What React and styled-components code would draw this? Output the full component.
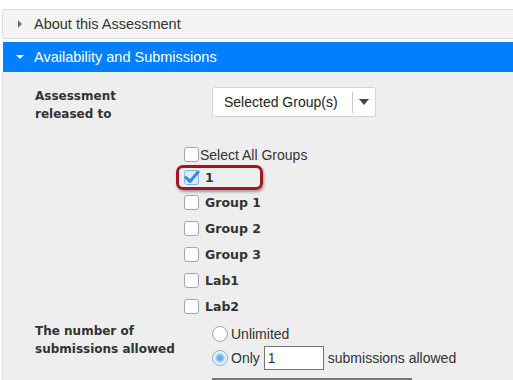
import React from 'react'
import styled, { createGlobalStyle } from 'styled-components';

const GlobalStyle = createGlobalStyle`
    body {
        margin: 0;
        background: #ffffff;
        font-family: "Liberation Sans", Arial, sans-serif;
        color: #333333;
    }
`;

const Page = styled.div`
    width: 513px;
    height: 380px;
    overflow: hidden;
    padding-top: 9px;
    padding-left: 2px;
    box-sizing: border-box;
`;

const PanelHeader = styled.div`
    display: flex;
    align-items: center;
    height: ${p => p.open ? 30 : 28}px;
    margin-bottom: ${p => p.open ? 0 : 3}px;
    padding-left: 13px;
    background: ${p => p.open ? '#0080ff' : '#f4f4f4'};
    color: ${p => p.open ? '#ffffff' : '#333333'};
    border: ${p => p.open ? 'none' : '1px solid #dcdcdc'};
    border-right: none;
    border-radius: ${p => p.open ? '0' : '3px 0 0 3px'};
    font-size: 14.5px;
    margin-left: ${p => p.open ? 1 : 0}px;
`;

const Caret = styled.span`
    width: 0;
    height: 0;
    ${p => p.open ? `
        border-left: 4px solid transparent;
        border-right: 4px solid transparent;
        border-top: 4px solid #ffffff;
        margin-right: 10px;
    ` : `
        border-top: 4px solid transparent;
        border-bottom: 4px solid transparent;
        border-left: 4px solid #777777;
        margin-left: 2px;
        margin-right: 12px;
    `}
`;

const Body = styled.div`
    background: #eeeeee;
    border-left: 1px solid #dddddd;
    height: 320px;
    padding: 15px 0 0 32px;
    box-sizing: border-box;
`;

const FieldRow = styled.div`
    display: grid;
    grid-template-columns: 177px 1fr;
`;

const Label = styled.div`
    font-family: "DejaVu Sans", Verdana, sans-serif;
    font-weight: bold;
    font-size: 12px;
    line-height: 18px;
    color: #333333;
    padding-top: ${p => p.top || 0}px;
`;

const SelectBox = styled.div`
    display: flex;
    align-items: center;
    width: 164px;
    height: 30px;
    box-sizing: border-box;
    background: #ffffff;
    border: 1px solid #d4d4d4;
    border-radius: 3px;
    font-size: 14px;
    color: #222222;
`;

const SelectText = styled.span`
    flex: 1;
    padding-left: 11px;
`;

const SelectDivider = styled.span`
    width: 1px;
    height: 21px;
    background: #c8c8c8;
`;

const SelectArrow = styled.span`
    width: 0;
    height: 0;
    margin: 0 6px;
    border-left: 5px solid transparent;
    border-right: 5px solid transparent;
    border-top: 6px solid #444444;
`;

const GroupList = styled.div`
    display: flex;
    flex-direction: column;
    padding-left: 149px;
    margin-top: 20px;
`;

const CheckRow = styled.label`
    position: relative;
    display: flex;
    align-items: center;
    height: ${p => p.h || 26}px;
    gap: ${p => p.plain ? 1 : 6}px;
    font-family: ${p => p.plain ? '"Liberation Sans", Arial, sans-serif' : '"DejaVu Sans", Verdana, sans-serif'};
    font-weight: ${p => p.plain ? 'normal' : 'bold'};
    font-size: ${p => p.plain ? 14 : 12.5}px;
    color: #333333;
`;

const Box = styled.span`
    width: 15px;
    height: 15px;
    box-sizing: border-box;
    background: #ffffff;
    border: 1px solid #a6a6a6;
    border-radius: 3px;
    display: flex;
    align-items: center;
    justify-content: center;
    ${p => p.checked && 'border-color: #7eb4ea; background: #ddecfb;'}
`;

const Highlight = styled.span`
    position: absolute;
    left: -8px;
    top: -1px;
    width: 87px;
    height: 25px;
    box-sizing: border-box;
    border: 3px solid #a31621;
    border-radius: 7px;
    box-shadow: 1px 2px 3px rgba(0, 0, 0, 0.35);
`;

const RadioList = styled.div`
    display: flex;
    flex-direction: column;
    padding-top: 3px;
`;

const RadioRow = styled.div`
    display: flex;
    align-items: center;
    height: 24px;
    gap: 3px;
    font-size: 14px;
    color: #333333;
`;

const Radio = styled.span`
    width: 16px;
    height: 16px;
    box-sizing: border-box;
    border-radius: 50%;
    border: 1px solid ${p => p.checked ? '#7eb4ea' : '#a6a6a6'};
    background: ${p => p.checked
        ? 'radial-gradient(circle, #4aa0e8 0, #7ab8ee 3px, #dcecfb 5px, #eef5fd 7px)'
        : '#ffffff'};
`;

const CountInput = styled.span`
    width: 60px;
    height: 24px;
    box-sizing: border-box;
    border: 1px solid #767676;
    background: #ffffff;
    padding-left: 3px;
    line-height: 22px;
    margin: 0 1px;
`;

const NextField = styled.div`
    width: 200px;
    margin-top: 8px;
    border-top: 2px solid #777777;
`;

const groups = ['Group 1', 'Group 2', 'Group 3', 'Lab1', 'Lab2'];

const Check = () => (
    <svg width="16" height="14" viewBox="0 0 16 14" style={{ marginTop: -2, flexShrink: 0 }}>
        <path d="M2 7.5 L6 11.5 L14 2" fill="none" stroke="#2f8ee0" strokeWidth="3" strokeLinecap="round" strokeLinejoin="round" />
    </svg>
);

const App = () => {
    return (
        <>
            <GlobalStyle />
            <Page>
                <PanelHeader>
                    <Caret />
                    About this Assessment
                </PanelHeader>
                <PanelHeader open>
                    <Caret open />
                    Availability and Submissions
                </PanelHeader>
                <Body>
                    <FieldRow>
                        <Label>Assessment<br />released to</Label>
                        <SelectBox>
                            <SelectText>Selected Group(s)</SelectText>
                            <SelectDivider />
                            <SelectArrow />
                        </SelectBox>
                    </FieldRow>
                    <GroupList>
                        <CheckRow plain h={23}>
                            <Box />Select All Groups
                        </CheckRow>
                        <CheckRow h={23}>
                            <Highlight />
                            <Box checked><Check /></Box>1
                        </CheckRow>
                        {groups.map(g => (
                            <CheckRow key={g}>
                                <Box />{g}
                            </CheckRow>
                        ))}
                    </GroupList>
                    <FieldRow>
                        <Label top={3}>The number of<br />submissions allowed</Label>
                        <RadioList>
                            <RadioRow>
                                <Radio />Unlimited
                            </RadioRow>
                            <RadioRow>
                                <Radio checked />Only
                                <CountInput>1</CountInput>
                                submissions allowed
                            </RadioRow>
                            <NextField />
                        </RadioList>
                    </FieldRow>
                </Body>
            </Page>
        </>
    )
};

export default App
